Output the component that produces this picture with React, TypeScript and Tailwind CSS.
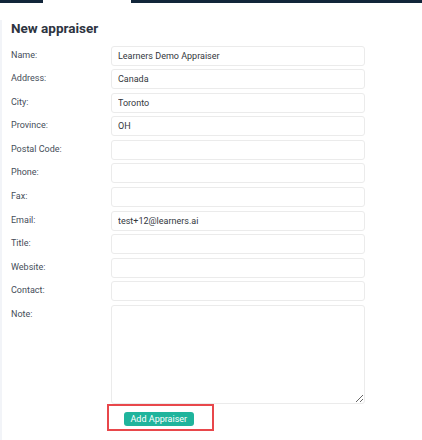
const fields: { label: string; value: string }[] = [
  { label: "Name:", value: "Learners Demo Appraiser" },
  { label: "Address:", value: "Canada" },
  { label: "City:", value: "Toronto" },
  { label: "Province:", value: "OH" },
  { label: "Postal Code:", value: "" },
  { label: "Phone:", value: "" },
  { label: "Fax:", value: "" },
  { label: "Email:", value: "test+12@learners.ai" },
  { label: "Title:", value: "" },
  { label: "Website:", value: "" },
  { label: "Contact:", value: "" },
]

export default function App() {
  return (
    <div className="w-[422px] h-[440px] bg-white overflow-hidden font-['Roboto',Arial,sans-serif]">
      {/* top nav strip with the active tab gap */}
      <div className="flex h-[3px]">
        <div className="w-[43px] bg-[#12263a]" />
        <div className="w-[88px] bg-white" />
        <div className="flex-1 bg-[#12263a]" />
      </div>

      <div className="h-[437px] border-l-2 border-[#f2f4f8] pl-[9px]">
        <h1 className="mt-[16.5px] text-[13.5px] leading-[16px] font-bold text-[#2d3441]">New appraiser</h1>

        <div className="mt-[10px] flex flex-col gap-[3.6px]">
          {fields.map((f) => (
            <div key={f.label} className="flex">
              <label className="w-[100px] text-[9px] leading-[18px] text-[#454d59]">{f.label}</label>
              <input
                defaultValue={f.value}
                className="w-[254px] h-[20px] rounded-[3px] border border-[#ebebeb] bg-white pl-[6px] text-[9px] text-[#33373d] outline-none"
              />
            </div>
          ))}
          <div className="flex">
            <label className="w-[100px] text-[9px] leading-[18px] text-[#454d59]">Note:</label>
            <textarea className="w-[254px] h-[99px] rounded-[3px] border border-[#ebebeb] bg-white outline-none" />
          </div>
        </div>

        {/* highlighted submit area */}
        <div className="ml-[96px] flex items-start w-[107px] h-[27px] border-2 border-[#e8474b] pt-[6px] pl-[15px]">
          <button className="h-[14px] rounded-[3px] bg-[#1fb49c] px-[6.5px] text-[9px] leading-[14px] text-white">
            Add Appraiser
          </button>
        </div>
      </div>
    </div>
  )
}
